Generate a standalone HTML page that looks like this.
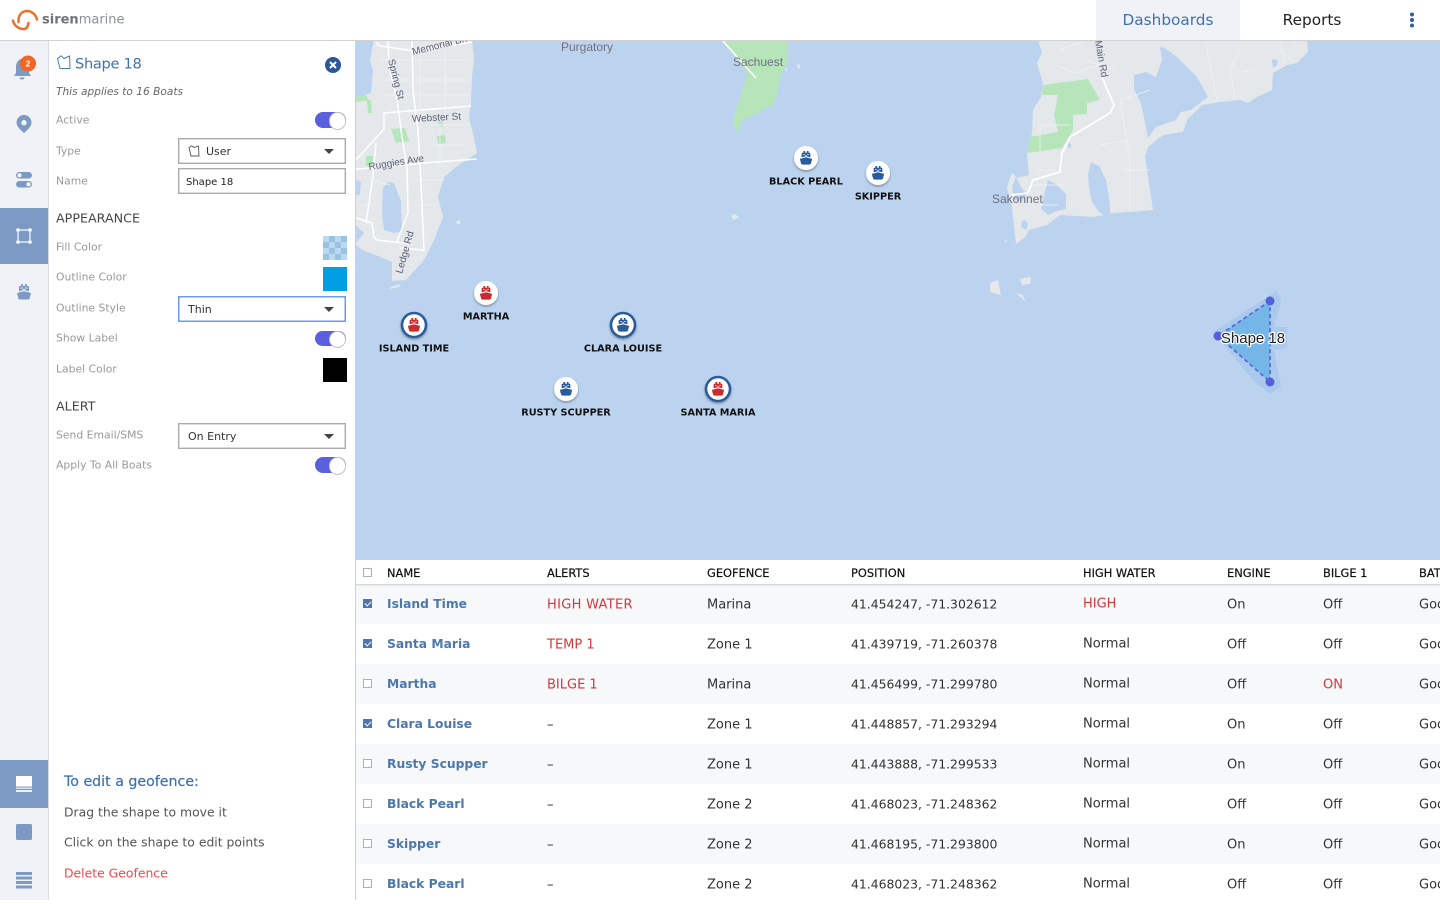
<!DOCTYPE html>
<html><head><meta charset="utf-8"><title>Siren Marine</title>
<style>
*{box-sizing:border-box}
html,body{margin:0;padding:0}
body{width:1440px;height:900px;overflow:hidden;position:relative;background:#fff;font-family:"DejaVu Sans","Liberation Sans",sans-serif;color:#333}
.a{position:absolute;white-space:nowrap}
.c{transform:translateY(-50%)}
.lbl{position:absolute;left:56px;font-size:10.8px;color:#999;white-space:nowrap;transform:translateY(-50%);margin-top:.4px}
.box{position:absolute;left:178px;width:168px;height:26px;border:1px solid #aaa;box-shadow:0 0 0 .5px #bbb inset;font-size:11px;color:#333;line-height:26px;padding-left:9px;background:#fff}
.car{position:absolute;right:11px;top:10px;width:0;height:0;border-left:5px solid transparent;border-right:5px solid transparent;border-top:5px solid #444}
.tg{position:absolute;left:315px;width:31px;height:15.500px;border-radius:8px;background:#5a5fdc}
.tg:after{content:"";position:absolute;right:0;top:0;width:15.500px;height:15.500px;border-radius:50%;background:#fff;border:1px solid #c4c4c4}
.sw{position:absolute;left:323px;width:24px;height:24px}
.h{position:absolute;left:56px;font-size:12.700px;color:#444;transform:translateY(-50%);margin-top:.4px}
.tile{position:absolute;left:0;width:48px;background:#7c9ac4}
.row{position:absolute;left:356px;width:1084px;height:40px;font-size:13px;color:#333}
.row.o{background:#f7f8fa}
.row span{position:absolute;top:50%;transform:translateY(-50%);white-space:nowrap;margin-top:1px}
.row .n{left:31px;font-weight:bold;color:#4c78ae;font-size:12.300px;margin-top:.4px}
.row .r{color:#d0393e}
.c1{left:191px}.c2{left:351px}.row .c3{left:495px;font-size:12.400px;margin-top:.4px}.row .c4{left:727px;margin-top:0}.c5{left:871px}.c6{left:967px}.c7{left:1063px}
.cb{position:absolute;left:7px;top:15px;width:9px;height:9px;border:1px solid #a9b0bb;background:#fff}
.cb.k{background:#4c78ae;border-color:#4c78ae}
.cb.k:after{content:"";position:absolute;left:1px;top:.5px;width:5px;height:3px;border-left:1.3px solid #fff;border-bottom:1.3px solid #fff;transform:rotate(-45deg)}
.th{position:absolute;top:572.500px;transform:translateY(-50%);font-size:11.400px;color:#111;white-space:nowrap;-webkit-text-stroke:.2px #111}
svg text{font-family:"Liberation Sans",sans-serif}
</style></head><body>

<svg class="a" style="left:356px;top:40px" width="1084" height="520" viewBox="356 40 1084 520">
<defs>
<symbol id="boat" viewBox="0 0 16 16">
<path fill="currentColor" d="M5 0h2v2H5zM9 0h2v2H9zM4 2h8a1 1 0 0 1 1 1v4.200L8 6 3 7.200V3a1 1 0 0 1 1-1z"/>
<path fill="currentColor" d="M8 7.200L15 9l-1.300 5.200Q13.300 15.500 12 15.500H4q-1.300 0-1.700-1.300L1 9z"/>
<path fill="none" stroke="#fff" stroke-opacity=".8" stroke-width=".9" d="M4.500 4h2.500M9 4h2.500M6.800 5 8 6 9.200 5"/>
</symbol>
<filter id="ds" x="-30%" y="-30%" width="160%" height="170%"><feDropShadow dx="0" dy="1.500" stdDeviation="1.200" flood-color="#000" flood-opacity=".35"/></filter>
</defs>
<rect x="356" y="40" width="1084" height="520" fill="#bcd3ef"/>

<!-- west land -->
<path fill="#e4e8eb" d="M374 40L472 40L474 60L472 77L471 103L469 118L473 133L477 153L456 167L444 177L438 197L443 217L434 240L424 260L406 280L392 281L392 262L378 256L362 250L356 245L356 100L362 96L371 93L373 70L370 60Z"/>
<path fill="#e4e8eb" d="M456 222l3-2 2 3-3 2zM390 287l10-3-1 3-9 2zM420 245l2 0 0 4-2 0z"/>
<path fill="#bcd3ef" d="M383 188l5-6 6 1 7 18 1 30-8 2-10-3-2-18zM356 180l5 2-1 12-4 2zM356 225l8 8-8 10z"/>
<path fill="#b5e5b9" d="M356 97l10-2 3 5-13 2zM367 100l4 0 1 13-4 0zM391 129l14-1 4 13-13 2zM437 136l8-1 1 8-8 1zM438 121l4 0 1 6-4 0zM366 156l7 0-1 10-6 0z"/>
<g fill="none" stroke="#fff" stroke-width="1.500">
<path d="M376 42l4 4 34 5 58-9M388 40l1 27 8 32 5 38 5 30 1 46-11 29M412 40l1 50 5 40 3 54 3 66-24-2M384 113l87-7M384 113v16l-28 31M356 169l17-1 50-5 54-4M376 143l-3 33-7 47M356 218l16 5 2 14 3 3 35 4"/>
</g>
<g fill="none" stroke="#f1f3f5" stroke-width=".7">
<path d="M380 60h90M380 80h90M385 95h85M420 60v60M445 45v70M430 125h40M430 145h35M370 180l20 5M415 180h30M415 205h20M360 205h15M440 118v50"/>
</g>

<!-- Sachuest -->
<path fill="#b5e5b9" d="M723 40L788 40L788 60L780 77L775 103L760 112L743 120L737 132L733 123L738 103L745 83L747 73Z"/>
<path fill="none" stroke="#fff" stroke-width="1.600" d="M722 40L756 78"/>
<path fill="#e4e8eb" d="M731 216l4-2 4 3-5 3zM785 68l2 0-1 4zM797 66l2-3 1 5-2 1z"/>

<!-- east land -->
<path fill="#e4e8eb" d="M1038 40L1042 53L1037 63L1043 83L1041 97L1033 110L1032 133L1027 153L1029 175L1017 178L1012 173L1007 187L1012 207L1016 244L1025 237L1029 230L1047 225L1060 215L1093 217L1113 213L1130 212L1153 210L1145 157L1148 147L1163 135L1183 132L1187 120L1202 105L1220 102L1240 100L1248 103L1257 97L1272 90L1273 73L1287 65L1297 63L1308 52L1307 40Z"/>
<path fill="#bcd3ef" d="M1160 48l3-1 14 10 20 20 11 20-17 13-10 2-5 8-20 7-8 11-7-35-7-13v-15l12-3 10 5 6-17z"/>
<path fill="#bcd3ef" d="M1272 60l3-1 3 2-1 4-3 3-2-4zM1091 162l8 4 7 14 3 17 2 24-9-7-3-2-7-10-3-14-1-14zM1048 180l8 4 10 10 0 15-9 2-9 4-7-6 3-14zM1022 221l3-1 3 4-2 6-5-3z"/>
<path fill="#bcd3ef" d="M1012 186l4-9 6 12 5 4-5 8-8-1zM1068 143l3 1 0 4-3 0z"/>
<path fill="#b5e5b9" d="M1043 85L1088 79L1100 100L1087 103L1087 114L1073 115L1073 130L1062 148L1027 153L1030 137L1058 132L1054 115L1058 95L1042 95Z"/>
<path fill="none" stroke="#fff" stroke-width="1.800" d="M1102 77L1114 105L1110 113L1070 137L1062 153L1060 172L1033 180L1028 193L1012 195"/>
<g fill="none" stroke="#f1f3f5" stroke-width=".7">
<path d="M1060 50l40-15M1055 65l20 8 30-10M1040 125h30M1040 125v25M1120 100l10 60 0 50M1100 145l30-5M1035 170h20M1035 185h30M1038 205h20M1085 60l30 10M1120 100l30-10M1125 170h25M1205 40l12 60M1240 50l-10 20 5 28M1255 70l-12 2M1280 40l5 22M1290 40l10 8M1280 50l15 12"/>
</g>
<path fill="#e4e8eb" d="M990 283l8-3 3 15-11-3zM1020 279l11-2-1 7-8 1zM1016 293l7 2 2 6zM1004 241l2-1 1 2z"/>

<!-- map labels -->
<g fill="#5c6078" font-size="10">
<text transform="translate(413,55) rotate(-14)" font-size="10">Memorial Blvd</text>
<text transform="translate(388,60) rotate(76)">Spring St</text>
<text x="412" y="122" transform="rotate(-3 412 122)">Webster St</text>
<text transform="translate(369,170) rotate(-9)">Ruggies Ave</text>
<text transform="translate(402,274) rotate(-74)">Ledge Rd</text>
<text x="561" y="51" fill="#70717d" font-size="12">Purgatory</text>
<text x="733" y="66" fill="#70717d" font-size="12">Sachuest</text>
<text x="992" y="203" fill="#70717d" font-size="12">Sakonnet</text>
<text transform="translate(1095,41) rotate(80)">Main Rd</text>
</g>

<!-- geofence -->
<path fill="#8fbbea" fill-opacity=".4" d="M1213 332L1277 291L1281 301L1274 327L1287 327L1287 348L1274 350L1281 386L1270 394L1255 382Z"/>
<path fill="#74b6e8" d="M1270 301L1218 336L1270 382Z"/>
<path fill="none" stroke="#5560dd" stroke-width="1.600" stroke-dasharray="4 3" d="M1270 301L1218 336L1270 382Z"/>
<g fill="#5560dd"><circle cx="1270" cy="301" r="4.500"/><circle cx="1218" cy="336" r="4.500"/><circle cx="1270" cy="382" r="4.500"/></g>
<text x="1253" y="343" text-anchor="middle" font-size="15" fill="#222" stroke="#fff" stroke-width="2.500" paint-order="stroke" stroke-linejoin="round">Shape 18</text>

<!-- markers -->
<g filter="url(#ds)" fill="#fff">
<circle cx="486" cy="293" r="12"/><circle cx="806" cy="158" r="12"/><circle cx="878" cy="173" r="12"/><circle cx="566" cy="389" r="12"/>
<circle cx="414" cy="325" r="12" stroke="#2a5b9c" stroke-width="2.600"/><circle cx="623" cy="325" r="12" stroke="#2a5b9c" stroke-width="2.600"/><circle cx="718" cy="389" r="12" stroke="#2a5b9c" stroke-width="2.600"/>
</g>
<g color="#cc2a2e"><use href="#boat" x="479" y="285.500" width="14" height="15"/><use href="#boat" x="407" y="317.500" width="14" height="15"/><use href="#boat" x="711" y="381.500" width="14" height="15"/></g>
<g color="#2a5b9c"><use href="#boat" x="799" y="150.500" width="14" height="15"/><use href="#boat" x="871" y="165.500" width="14" height="15"/><use href="#boat" x="616" y="317.500" width="14" height="15"/><use href="#boat" x="559" y="381.500" width="14" height="15"/></g>
<g text-anchor="middle" fill="#111" style="font-size:9.700px;font-weight:bold">
<text style="font-family:'DejaVu Sans',sans-serif" x="806" y="184.500">BLACK PEARL</text>
<text style="font-family:'DejaVu Sans',sans-serif" x="878" y="199.500">SKIPPER</text>
<text style="font-family:'DejaVu Sans',sans-serif" x="486" y="319.500">MARTHA</text>
<text style="font-family:'DejaVu Sans',sans-serif" x="414" y="351.500">ISLAND TIME</text>
<text style="font-family:'DejaVu Sans',sans-serif" x="623" y="351.500">CLARA LOUISE</text>
<text style="font-family:'DejaVu Sans',sans-serif" x="566" y="415.500">RUSTY SCUPPER</text>
<text style="font-family:'DejaVu Sans',sans-serif" x="718" y="415.500">SANTA MARIA</text>
</g>
</svg>

<!-- top bar -->
<div class="a" style="left:0;top:0;width:1440px;height:41px;background:#fff;border-bottom:1px solid #d2d2d2"></div>
<svg class="a" style="left:0;top:0" width="48" height="40"><g fill="none" stroke="#f0702a" stroke-width="2.500" stroke-linecap="round"><path d="M13 20.500C14 26 19 29 24 29C27 29 28 26 28.500 23"/><path d="M18.500 22C18 15 22 11 27 11C32 11 36 15 37 19.500"/></g></svg>
<div class="a c" style="left:42px;top:19.500px;font-size:13px;color:#6f7378"><b>siren</b><span style="color:#8b8f94">marine</span></div>
<div class="a" style="left:1096px;top:0;width:144px;height:40px;background:#f0f2f7;color:#3f72ad;font-size:15.300px;line-height:40px;text-align:center">Dashboards</div>
<div class="a" style="left:1240px;top:0;width:144px;height:40px;color:#222;font-size:15.300px;line-height:40px;text-align:center">Reports</div>
<svg class="a" style="left:1406px;top:10px" width="12" height="20"><g fill="#2b5fa0"><circle cx="6" cy="4.500" r="2"/><circle cx="6" cy="10" r="2"/><circle cx="6" cy="15.500" r="2"/></g></svg>

<!-- left rail -->
<div class="a" style="left:0;top:41px;width:49px;height:859px;background:#f0f2f7;border-right:1px solid #d9dbe0"></div>
<div class="tile" style="top:208px;height:56px"></div>
<div class="tile" style="top:760px;height:48px"></div>
<svg class="a" style="left:0;top:41px" width="48" height="859" viewBox="0 41 48 859">
<g fill="#7c9ac4">
<path d="M22 59c4 0 7 3 7 8v6l2 3H14l2-3v-6c0-5 3-8 6-8zM19.500 77.500h5a2.500 2 0 0 1-5 0z"/>
<path fill-rule="evenodd" d="M24 115a7.500 7.500 0 0 1 7.500 7.500C31.500 127 27 130 24 133c-3-3-7.500-6-7.500-10.500A7.500 7.500 0 0 1 24 115zm0 5a2.700 2.700 0 1 0 0 5.400 2.700 2.700 0 0 0 0-5.400z"/>
<rect x="16" y="172" width="16" height="6.500" rx="3.250"/><rect x="16" y="181" width="16" height="6.500" rx="3.250"/>
<use href="#boat" x="16" y="284" width="16" height="16" color="#7c9ac4"/>
<rect x="16" y="824" width="16" height="16" rx="1.500"/>
<path d="M16 872h16v3H16zM16 876.500h16v3H16zM16 881h16v3H16zM16 885.500h16v3H16z"/>
</g>
<g fill="#fff"><circle cx="19.500" cy="175.250" r="2"/><circle cx="28.500" cy="184.250" r="2"/></g>
<circle cx="28" cy="63.500" r="8" fill="#f26522"/>
<text x="28" y="66.500" text-anchor="middle" font-size="8.500" font-weight="bold" fill="#fff">2</text>
<g fill="none" stroke="#fff" stroke-width="1.200"><rect x="18" y="230" width="12" height="12"/></g>
<g fill="#fff"><circle cx="18" cy="230" r="1.800"/><circle cx="30" cy="230" r="1.800"/><circle cx="18" cy="242" r="1.800"/><circle cx="30" cy="242" r="1.800"/>
<rect x="16" y="776" width="16" height="10.500"/><rect x="16" y="787.500" width="16" height="1.300" opacity=".85"/><rect x="16" y="790" width="16" height="2" opacity=".85"/></g>
</svg>

<!-- panel -->
<div class="a" style="left:49px;top:41px;width:307px;height:859px;background:#fff;border-right:1px solid #cfd1d4"></div>
<svg class="a" style="left:56px;top:55px" width="16" height="16"><path fill="none" stroke="#4a7fb5" stroke-width="1" d="M1.500 3.500L5 .8 8 3.500 13.500 1 14 13.500H4z"/></svg>
<div class="a c" style="left:75px;top:64px;font-size:14.600px;letter-spacing:-.3px;color:#3f72ad">Shape 18</div>
<svg class="a" style="left:325px;top:57px" width="16" height="16"><circle cx="8" cy="8" r="8" fill="#2b5797"/><path d="M5 5l6 6M11 5l-6 6" stroke="#fff" stroke-width="2"/></svg>
<div class="a c" style="left:56px;top:92px;font-size:10.600px;font-style:italic;color:#666">This applies to 16 Boats</div>

<div class="lbl" style="top:120px">Active</div><div class="tg" style="top:112px"></div>
<div class="lbl" style="top:151px">Type</div>
<div class="box" style="top:138px;padding-left:27px">User<svg class="a" style="left:9px;top:6px" width="13" height="13"><path fill="none" stroke="#555" stroke-width=".9" d="M1 2.500L3.800 .8 6 2.500 10.500 1 11 11H3z"/></svg><span class="car"></span></div>
<div class="lbl" style="top:181px">Name</div>
<div class="box" style="top:168px;padding-left:7px;font-size:10px;color:#222;line-height:28px">Shape 18</div>
<div class="h" style="top:218px">APPEARANCE</div>
<div class="lbl" style="top:247px">Fill Color</div>
<div class="sw" style="top:236px;background:conic-gradient(#9cc3dd 25%,#b9daf0 0 50%,#9cc3dd 0 75%,#b9daf0 0) 0 0/12px 12px"></div>
<div class="lbl" style="top:277px">Outline Color</div>
<div class="sw" style="top:267px;background:#009fe3"></div>
<div class="lbl" style="top:308px">Outline Style</div>
<div class="box" style="top:296px;border-color:#6b9bf0;box-shadow:0 0 0 .5px #6b9bf0 inset">Thin<span class="car"></span></div>
<div class="lbl" style="top:338px">Show Label</div><div class="tg" style="top:330.500px"></div>
<div class="lbl" style="top:369px">Label Color</div>
<div class="sw" style="top:358px;background:#000"></div>
<div class="h" style="top:406px">ALERT</div>
<div class="lbl" style="top:435px">Send Email/SMS</div>
<div class="box" style="top:423px">On Entry<span class="car"></span></div>
<div class="lbl" style="top:465px">Apply To All Boats</div><div class="tg" style="top:457px"></div>

<div class="a c" style="left:64px;top:781.500px;font-size:14.200px;color:#3f72ad;-webkit-text-stroke:.2px #3f72ad">To edit a geofence:</div>
<div class="a c" style="left:64px;top:812.400px;font-size:12.400px;color:#555">Drag the shape to move it</div>
<div class="a c" style="left:64px;top:842.400px;font-size:12.400px;color:#555">Click on the shape to edit points</div>
<div class="a c" style="left:64px;top:873.400px;font-size:12.400px;color:#f0484f">Delete Geofence</div>

<!-- table -->
<div class="a" style="left:356px;top:560px;width:1084px;height:340px;background:#fff"></div>
<div class="cb" style="left:363px;top:568px"></div>
<div class="th" style="left:387px">NAME</div><div class="th" style="left:547px">ALERTS</div><div class="th" style="left:707px">GEOFENCE</div><div class="th" style="left:851px">POSITION</div><div class="th" style="left:1083px">HIGH WATER</div><div class="th" style="left:1227px">ENGINE</div><div class="th" style="left:1323px">BILGE 1</div><div class="th" style="left:1419px">BATTERY</div>

<div class="row o" style="top:584px"><i class="cb k"></i><span class="n">Island Time</span><span class="c1 r" style="letter-spacing:.3px">HIGH WATER</span><span class="c2">Marina</span><span class="c3">41.454247, -71.302612</span><span class="c4 r">HIGH</span><span class="c5">On</span><span class="c6">Off</span><span class="c7">Good</span></div>
<div class="row" style="top:624px"><i class="cb k"></i><span class="n">Santa Maria</span><span class="c1 r">TEMP 1</span><span class="c2">Zone 1</span><span class="c3">41.439719, -71.260378</span><span class="c4">Normal</span><span class="c5">Off</span><span class="c6">Off</span><span class="c7">Good</span></div>
<div class="row o" style="top:664px"><i class="cb"></i><span class="n">Martha</span><span class="c1 r">BILGE 1</span><span class="c2">Marina</span><span class="c3">41.456499, -71.299780</span><span class="c4">Normal</span><span class="c5">Off</span><span class="c6 r">ON</span><span class="c7">Good</span></div>
<div class="row" style="top:704px"><i class="cb k"></i><span class="n">Clara Louise</span><span class="c1">–</span><span class="c2">Zone 1</span><span class="c3">41.448857, -71.293294</span><span class="c4">Normal</span><span class="c5">On</span><span class="c6">Off</span><span class="c7">Good</span></div>
<div class="row o" style="top:744px"><i class="cb"></i><span class="n">Rusty Scupper</span><span class="c1">–</span><span class="c2">Zone 1</span><span class="c3">41.443888, -71.299533</span><span class="c4">Normal</span><span class="c5">On</span><span class="c6">Off</span><span class="c7">Good</span></div>
<div class="row" style="top:784px"><i class="cb"></i><span class="n">Black Pearl</span><span class="c1">–</span><span class="c2">Zone 2</span><span class="c3">41.468023, -71.248362</span><span class="c4">Normal</span><span class="c5">Off</span><span class="c6">Off</span><span class="c7">Good</span></div>
<div class="row o" style="top:824px"><i class="cb"></i><span class="n">Skipper</span><span class="c1">–</span><span class="c2">Zone 2</span><span class="c3">41.468195, -71.293800</span><span class="c4">Normal</span><span class="c5">On</span><span class="c6">Off</span><span class="c7">Good</span></div>
<div class="row" style="top:864px"><i class="cb"></i><span class="n">Black Pearl</span><span class="c1">–</span><span class="c2">Zone 2</span><span class="c3">41.468023, -71.248362</span><span class="c4">Normal</span><span class="c5">Off</span><span class="c6">Off</span><span class="c7">Good</span></div>
<div class="a" style="left:356px;top:584px;width:1084px;height:1px;background:#d8d8d8;box-shadow:0 1px 1px rgba(0,0,0,.08)"></div>
</body></html>
